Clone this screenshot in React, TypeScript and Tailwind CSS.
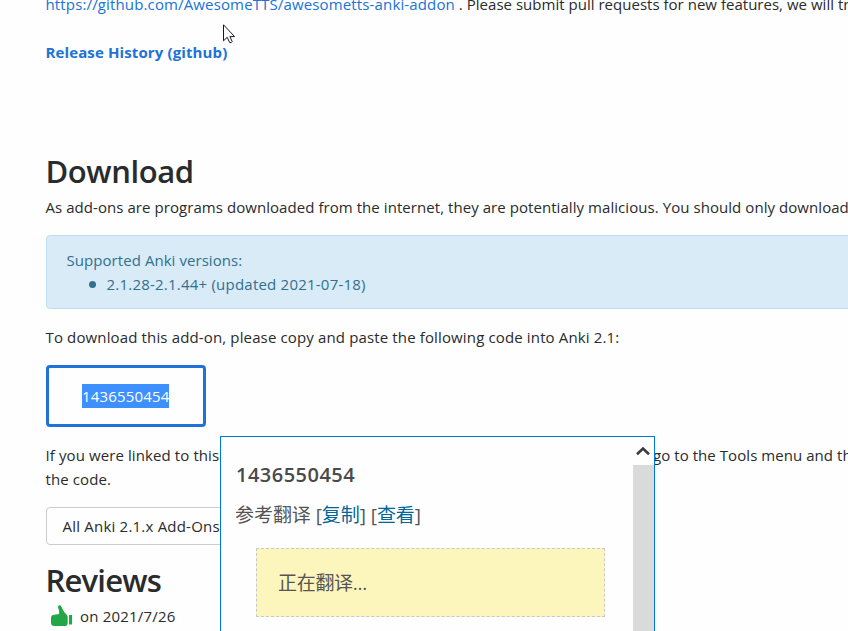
import React from "react";

function Cursor() {
  return (
    <svg className="absolute left-[223px] top-[24px]" width="13" height="20" viewBox="0 0 13 20">
      <path
        d="M.5.8v16l3.7-3.5 2.5 5.3h1.6l.9-1-2.3-5h4.7z"
        fill="#fff"
        stroke="#111827"
        strokeWidth="1"
      />
    </svg>
  );
}

function ThumbUp() {
  return (
    <svg width="22" height="22" viewBox="0 0 22 22" fill="#22a745" className="shrink-0">
      <path d="M7.600.5C8.600-.3 9.700.300 10.300 1.500L12.600 6c.4.700.6 1.100 1.200 1.700l1.900 2.100c.7.800 1 1.500 1 2.500v5.600c0 1.900-1.100 3.100-3 3.100H3.300C1.300 21 0 19.700 0 17.700v-4.600C0 11 1.200 9.900 3.200 9.700l3.500-.4c1.100-.1 1.600-.8 1.500-1.800L8 5.500C7.800 4.100 6.300 2 7.600.5z" />
      <path d="M18 10h3.100v9.500H18z" />
    </svg>
  );
}

function Popup() {
  return (
    <div className="absolute left-[220px] top-[436px] flex h-[195px] w-[435px] border border-b-0 border-[#0078d7] bg-[#fefefe] font-['Open_Sans','Noto_Sans_CJK_SC',sans-serif] text-[#4a4a4a]">
      <div className="flex w-[412px] flex-col pl-[15px] pt-[24px]">
        <div className="text-[20px] font-semibold leading-[28px] tracking-[0.48px]">1436550454</div>
        <div className="-ml-px mt-[12px] flex h-[28px] items-center whitespace-pre text-[19px] leading-[28px] tracking-[-0.06px] text-[#555]">
          参考翻译 [<span className="text-[#006699]">复制</span>] [<span className="text-[#006699]">查看</span>]
        </div>
        <div className="ml-[20px] mt-[19px] flex h-[69px] w-[349px] items-center border border-dashed border-[#c8c8d0] bg-[#fcf6bd] pl-[21px] text-[19px] tracking-[-0.3px] text-[#555]">
          正在翻译...
        </div>
      </div>
      <div className="flex w-[21px] flex-col">
        <div className="flex h-[28px] items-center pl-[3px]">
          <svg width="14" height="10" viewBox="0 0 14 10" fill="none" stroke="#3c3c3c" strokeWidth="2.600" className="shrink-0">
            <path d="M1 8.200 7 2.600l6 5.600" />
          </svg>
        </div>
        <div className="flex-1 bg-[#dadada]" />
      </div>
    </div>
  );
}

export default function App() {
  return (
    <div className="relative h-[631px] w-[848px] overflow-hidden bg-[#fefefe] font-['Open_Sans','Noto_Sans',sans-serif] text-[15px] leading-[24px] tracking-[0.06px] text-[#292b2c]">
      <main className="-mt-[8px] flex w-[1100px] flex-col items-start pl-[46px]">
        <p className="-ml-[0.5px] whitespace-nowrap tracking-[0.02px]">
          <a className="tracking-[0.14px] text-[#2072d6]">https://github.com/AwesomeTTS/awesometts-anki-addon</a> . Please submit pull
          requests for new features, we will tr
        </p>
        <p className="-ml-[0.5px] mt-[24px] font-bold tracking-[0.12px] text-[#2072d6]">Release History (github)</p>
        <h2 className="-ml-[0.5px] mt-[88px] text-[31px] font-[560] leading-[38px] tracking-[-0.4px]">Download</h2>
        <p className="-ml-[0.5px] mt-[5px] whitespace-nowrap">
          As add-ons are programs downloaded from the internet, they are potentially malicious. You should only download
        </p>
        <div className="mt-[16px] w-full rounded-[4px] border border-[#bcdff1] bg-[#d9ebf7] px-[19.500px] py-[12px] text-[#31708f]">
          <p>Supported Anki versions:</p>
          <ul className="pl-[22px]">
            <li className="flex items-center tracking-[0.22px]">
              <span className="mr-[11px] mt-px h-[7px] w-[7px] rounded-full bg-[#31708f]" />
              2.1.28-2.1.44+ (updated 2021-07-18)
            </li>
          </ul>
        </div>
        <p className="-ml-[0.5px] mt-[16px] tracking-[0.14px]">
          To download this add-on, please copy and paste the following code into Anki 2.1:
        </p>
        <div className="mt-[16px] flex h-[62px] w-[160px] items-center rounded-[4px] border-[3px] border-[#2072d6] pl-[33px]">
          <span className="bg-[#3e90ff] tracking-[0.16px] text-white">1436550454</span>
        </div>
        <div className="-ml-[0.5px] mt-[16px] flex whitespace-nowrap">
          <p className="w-[607.500px] tracking-[0.1px]">
            If you were linked to this
            <br />
            the code.
          </p>
          <p>go to the Tools menu and th</p>
        </div>
        <div className="mt-[16px] flex h-[38px] w-[192px] items-center whitespace-nowrap rounded-[4px] border border-[#cccccc] pl-[15.500px] tracking-[0.21px]">
          All Anki 2.1.x Add-Ons
        </div>
        <h2 className="-ml-[0.5px] mt-[16px] text-[31px] font-[560] leading-[38px] tracking-[-0.8px]">Reviews</h2>
        <div className="mt-[5px] flex items-center pl-[5px]">
          <ThumbUp />
          <span className="ml-[7px] tracking-[0.2px]">on 2021/7/26</span>
        </div>
      </main>
      <Cursor />
      <Popup />
    </div>
  );
}
